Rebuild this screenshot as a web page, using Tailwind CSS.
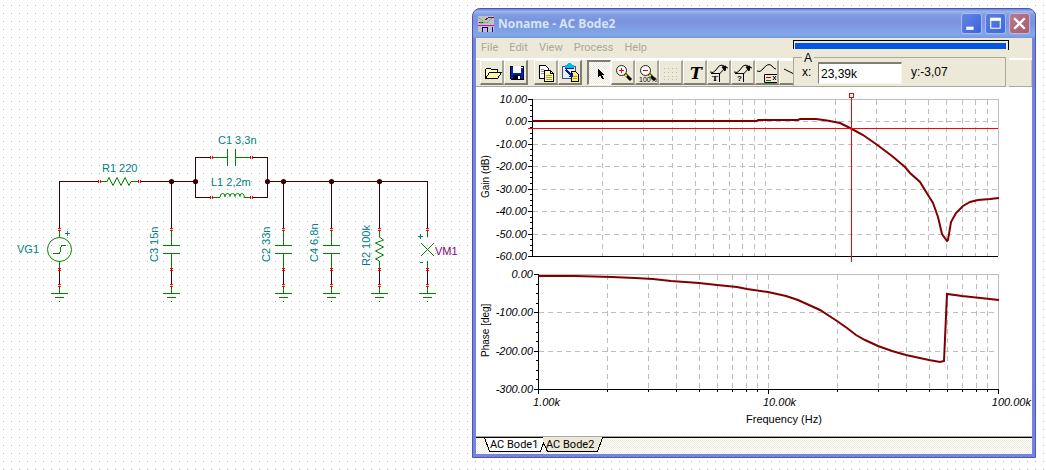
<!DOCTYPE html>
<html lang="en">
<head>
<meta charset="utf-8">
<title>Noname - AC Bode2</title>
<script src="https://cdn.jsdelivr.net/npm/@tailwindcss/browser@4"></script>
</head>
<body class="bg-white text-[11px] text-black font-['Liberation_Sans',Arial,sans-serif]">
<main class="flex min-h-screen items-start overflow-hidden pt-2 pr-[10px] [background:radial-gradient(circle_at_3.5px_5.5px,#b4b4b4_0.7px,transparent_0.8px)_0_0/8px_8px,#fff]">

<!-- Circuit schematic -->
<section class="w-[472px] shrink-0" aria-label="Schematic">
<svg class="block w-full" viewBox="0 8 472 440" fill="none" shape-rendering="crispEdges">
  <defs>
    <g id="pin" stroke="#f00"><path d="M-1 -.5h3M-1 1.5h3"/></g>
    <g id="hpin" stroke="#f00"><path d="M-.5 -1v3M1.5 -1v3"/></g>
    <g id="gnd"><path d="M.5 40v16" stroke="#400000"/><path d="M.5 57v7M-8 64.5h17M-4 68.5h9M0 72.5h1" stroke="#008000"/><use href="#pin" y="40"/><use href="#pin" y="56"/></g>
    <g id="cap"><path d="M.5 1v15M-8 16.5h17M-8 24.5h17M.5 25v15" stroke="#008000"/><use href="#pin"/><use href="#gnd"/></g>
  </defs>
  <g stroke="#400000">
    <path d="M59.5 229V181.5H99M140 181.5H195.500M171.500 181v48M211 157.500H195.500V197.500H211M252 157.500H267.500V197.500H252M267 181.500H427.500V229M283.500 181v48M331.500 181v48M379.500 181v48"/>
  </g>
  <g fill="#400000" shape-rendering="auto">
    <circle cx="171.500" cy="181.500" r="2.600"/><circle cx="195.500" cy="181.500" r="2.600"/><circle cx="267.500" cy="181.500" r="2.600"/><circle cx="283.500" cy="181.500" r="2.600"/><circle cx="331.500" cy="181.500" r="2.600"/><circle cx="379.500" cy="181.500" r="2.600"/>
  </g>
  <g stroke="#008000">
    <path d="M100 181.500h7M131 181.500h8M59.500 230v7M59.500 261v8M53 253.500h6L60.500 251V248L62 245.500H66"/>
    <path d="M212 157.500h15M227.500 149v17M235.500 149v17M236 157.500h15M212 197.500h8M244 197.500h7M379.500 230v7M379.500 261v8M427.500 230v7M427.500 261v8"/>
    <g shape-rendering="auto">
      <circle cx="59.500" cy="249.500" r="12"/>
      <path d="M107 181.500l2-4 4 8 4-8 4 8 4-8 4 8 2-4"/>
      <path d="M220 197.500q0-4 2.500-4t2.500 3q-1 1 0 0q0-3 2.500-3t2.500 3q0-3 2.500-3t2.500 3q0-3 2.500-3t2.500 3q0-3 2-3t2.500 4"/>
      <path d="M379.500 237l4 3-8 3 8 4-8 4 8 4-8 4 4 2M421 243l13 13M434 243l-13 13"/>
    </g>
  </g>
  <use href="#cap" x="171" y="229"/><use href="#cap" x="283" y="229"/><use href="#cap" x="331" y="229"/>
  <use href="#gnd" x="59" y="229"/><use href="#gnd" x="379" y="229"/><use href="#gnd" x="427" y="229"/>
  <use href="#pin" x="59" y="229"/><use href="#pin" x="379" y="229"/><use href="#pin" x="427" y="229"/>
  <use href="#hpin" x="99" y="181"/><use href="#hpin" x="139" y="181"/>
  <use href="#hpin" x="211" y="157"/><use href="#hpin" x="251" y="157"/><use href="#hpin" x="211" y="197"/><use href="#hpin" x="251" y="197"/>
  <path d="M65 233.500h5M67.500 231v5M418 236.500h5M420.500 234v5M420 262.500h3" stroke="#008080"/>
  <g fill="#008080" class="text-[11px]">
    <text x="102" y="172">R1 220</text>
    <text x="218" y="144">C1 3,3n</text>
    <text x="211" y="186">L1 2,2m</text>
    <text x="17" y="253">VG1</text>
    <text transform="translate(158 262) rotate(-90)">C3 15n</text>
    <text transform="translate(270 262) rotate(-90)">C2 33n</text>
    <text transform="translate(318 262) rotate(-90)">C4 6,8n</text>
    <text transform="translate(370 266) rotate(-90)">R2 100k</text>
    <text x="435" y="255" fill="#800080">VM1</text>
  </g>
</svg>
</section>

<!-- Diagram window -->
<section class="relative flex min-w-0 flex-1 flex-col rounded-t-lg border border-[#4e52bd] bg-[#7585de] px-[3px] pb-[3px]">
  <header class="-mx-[3px] flex h-[29px] items-center rounded-t-[7px] bg-[linear-gradient(#6f83d4,#9ab6ec_8%,#7f9de2_20%,#7993dd_45%,#7f9fe4_70%,#82a8e9_88%,#7896dc)] px-[5px]">
    <svg class="size-4 shrink-0" viewBox="0 0 16 16" fill="none" shape-rendering="crispEdges">
      <path fill="#c0c0c0" d="M0 0h16v16H0z"/>
      <path d="M1 6h4M7 4l3-2 3-1h3" stroke="#800060"/><path d="M1 2l5 4 3 1 5-5M2 7h4" stroke="#0e0" stroke-dasharray="2 1" shape-rendering="auto"/>
      <path d="M0 9.500h16" stroke="#f000c0"/><path d="M4.500 11v5M9.500 11v5M14.500 11v5" stroke="#0000c0"/><path d="M4 11.500h6" stroke="#0000c0"/>
    </svg>
    <h1 class="ml-1 flex-1 whitespace-nowrap text-[12px] leading-4 font-bold text-[#d8e4f8] font-['Open_Sans',sans-serif]">Noname - AC Bode2</h1>
    <div class="flex gap-[3px]">
      <button aria-label="Minimize" class="size-[21px] rounded-[3px] border border-[#a9bdf0] bg-linear-to-br from-[#6685e4] to-[#3a62dc]"><svg viewBox="0 0 18 18" class="block"><path fill="#fff" d="M4 12h7v3H4z"/></svg></button>
      <button aria-label="Maximize" class="size-[21px] rounded-[3px] border border-[#a9bdf0] bg-linear-to-br from-[#5b7ce0] to-[#3a6ae4]"><svg viewBox="0 0 18 18" class="block" fill="none" stroke="#fff"><path d="M4.500 4.500h9v9h-9z"/><path d="M4 5h10" stroke-width="3"/></svg></button>
      <button aria-label="Close" class="size-[21px] rounded-[3px] border border-[#c5b5dc] bg-linear-to-br from-[#b67a90] to-[#ab5a6c]"><svg viewBox="0 0 18 18" class="block"><path d="M4 4l10 10M14 4L4 14" stroke="#fff" stroke-width="2.200"/></svg></button>
    </div>
  </header>

  <nav class="flex h-5 items-center gap-[11px] bg-[#ece9d8] pl-[5px] text-[11px] leading-4 text-[#aca899] font-[Roboto,sans-serif]">
    <button>File</button><button>Edit</button><button>View</button><button>Process</button><button>Help</button>
  </nav>

  <div class="flex h-[29px] items-start overflow-hidden border-t-2 border-b border-t-white border-b-[#aca899] bg-[#ece9d8] pl-1">
    <button aria-label="Open" class="h-[25px] w-6 shrink-0 border-t border-l border-r-2 border-b-2 border-t-white border-l-white border-r-[#aca899] border-b-[#817d70]">
      <svg class="block h-[22px] w-[21px]" viewBox="0 0 21 22" shape-rendering="crispEdges"><path d="M4.500 17.500V8.500l1-1h4l1 1h6v3" fill="#ffffc0" stroke="#000"/><path d="M4.500 17.500l4-6h12l-4 6z" fill="#fff8a0" stroke="#000"/></svg></button>
    <button aria-label="Save" class="h-[25px] w-6 shrink-0 border-t border-l border-r-2 border-b-2 border-t-white border-l-white border-r-[#817d70] border-b-[#817d70]">
      <svg class="block h-[22px] w-[21px]" viewBox="0 0 21 22" shape-rendering="crispEdges"><path d="M5 5h14v14H6l-1-1z" fill="#000"/><path d="M6 6h12v12H6z" fill="#0020d0"/><path d="M8 5h8v7H8z" fill="#fff"/><path d="M8 14h8v5H8z" fill="#000"/><path d="M13 15h2v3h-2z" fill="#fff"/><path d="M16 6h2v1h-2z" fill="#fff"/></svg></button>
    <button aria-label="Copy" class="ml-[6px] h-[25px] w-6 shrink-0 border-t border-l border-r-2 border-b-2 border-t-white border-l-white border-r-[#aca899] border-b-[#817d70]">
      <svg class="block h-[22px] w-[21px]" viewBox="0 0 21 22" shape-rendering="crispEdges" stroke="#000"><path d="M4.500 4.500h6l3 3v10h-9z" fill="#fff"/><path d="M6 8.500h3M6 10.500h3M6 12.500h3" stroke="#999"/><path d="M9.500 9.500h6l3 3v8h-9z" fill="#ffffa0"/><path d="M15.500 9.500v3h3" fill="none"/><path d="M11 14.500h6M11 16.500h6M11 18.500h6" stroke="#a8a040"/></svg></button>
    <button aria-label="Paste" class="h-[25px] w-6 shrink-0 border-t border-l border-r-2 border-b-2 border-t-white border-l-white border-r-[#817d70] border-b-[#817d70]">
      <svg class="block h-[22px] w-[21px]" viewBox="0 0 21 22" shape-rendering="crispEdges"><path d="M3.500 5.500h13v12h-13z" fill="#e8eeff" stroke="#405080"/><path d="M6 4h2l1-2h3l1 2h2v3H6z" fill="#00b8f0"/><path d="M6 7.500h9" stroke="#00208a"/><path d="M12.500 10.500h4l3 3v7h-7z" fill="#fff060" stroke="#000"/><path d="M14 15.500h4M14 17.500h4" stroke="#a8a040"/><path d="M7 9l6 6" stroke="#0018a0" stroke-width="2"/><path d="M14 11v5H9z" fill="#0018a0"/></svg></button>
    <button aria-label="Select" aria-pressed="true" class="ml-[5px] h-[25px] w-6 shrink-0 border-t-2 border-l-2 border-r border-b border-t-[#817d70] border-l-[#817d70] border-r-white border-b-white bg-[repeating-conic-gradient(#ece9d8_0_25%,#fff_0_50%)] bg-size-[2px_2px]">
      <svg class="block h-[22px] w-[21px]" viewBox="0 0 21 22" shape-rendering="crispEdges"><path d="M9 6v9l2-2 2 4h2l-2-4h2z" fill="#000"/></svg></button>
    <button aria-label="Zoom in" class="h-[25px] w-6 shrink-0 border-t border-l border-r-2 border-b-2 border-t-white border-l-white border-r-[#aca899] border-b-[#817d70]">
      <svg class="block h-[22px] w-[21px]" viewBox="0 0 21 22"><path d="M13 13l6 6" stroke="#000" stroke-width="3"/><path d="M13 14l2 1" stroke="#ee0" stroke-width="2"/><circle cx="9.500" cy="9.500" r="5" fill="#fff" stroke="#222"/><path d="M7 9.500h5M9.500 7v5" stroke="#f00" shape-rendering="crispEdges"/></svg></button>
    <button aria-label="Zoom 100%" class="h-[25px] w-6 shrink-0 border-t border-l border-r-2 border-b-2 border-t-white border-l-white border-r-[#aca899] border-b-[#817d70]">
      <svg class="block h-[22px] w-[21px]" viewBox="0 0 21 22"><path d="M13 13l6 6" stroke="#000" stroke-width="3"/><path d="M13 14l2 1" stroke="#ee0" stroke-width="2"/><circle cx="9.500" cy="9.500" r="5" fill="#fff" stroke="#222"/><path d="M7 9.500h5" stroke="#f00" shape-rendering="crispEdges"/><text x="3" y="21" font-size="7">100%</text></svg></button>
    <button aria-label="Grid" class="h-[25px] w-6 shrink-0 border-t border-l border-r-2 border-b-2 border-t-white border-l-white border-r-[#aca899] border-b-[#817d70]">
      <svg class="block h-[22px] w-[21px]" viewBox="0 0 21 22" shape-rendering="crispEdges"><path d="M4 7.500h14M4 11.500h14M4 15.500h14M4 18.500h14" stroke="#bcb8a8" stroke-dasharray="1 3"/></svg></button>
    <button aria-label="Text" class="h-[25px] w-6 shrink-0 border-t border-l border-r-2 border-b-2 border-t-white border-l-white border-r-[#aca899] border-b-[#817d70]">
      <svg class="block h-[22px] w-[21px]" viewBox="0 0 21 22"><text x="12" y="18" text-anchor="middle" font-size="16" font-weight="bold" font-style="italic" font-family="DejaVu Serif">T</text></svg></button>
    <button aria-label="Text label" class="h-[25px] w-6 shrink-0 border-t border-l border-r-2 border-b-2 border-t-white border-l-white border-r-[#aca899] border-b-[#817d70]">
      <svg class="block h-[22px] w-[21px] overflow-visible" viewBox="0 0 21 22" fill="none" stroke="#000"><path d="M2 11q3 2 6-2 4-7 8-4 2 2 4 2"/><path d="M11.500 13L18 6"/><path d="M14 6l4-1-1 5z" fill="#000"/><path d="M3 12.500h9M11.500 13v8"/><text x="4" y="20" font-size="8" font-weight="bold" font-family="DejaVu Serif" fill="#000" stroke="none">T</text></svg></button>
    <button aria-label="Query label" class="h-[25px] w-6 shrink-0 border-t border-l border-r-2 border-b-2 border-t-white border-l-white border-r-[#aca899] border-b-[#817d70]">
      <svg class="block h-[22px] w-[21px] overflow-visible" viewBox="0 0 21 22" fill="none" stroke="#000"><path d="M2 11q3 2 6-2 4-7 8-4 2 2 4 2"/><path d="M11.500 13L18 6"/><path d="M14 6l4-1-1 5z" fill="#000"/><path d="M3 12.500h9M11.500 13v8"/><text x="5" y="20" font-size="8" font-weight="bold" fill="#000" stroke="none">?</text></svg></button>
    <button aria-label="Legend" class="h-[25px] w-6 shrink-0 border-t border-l border-r-2 border-b-2 border-t-white border-l-white border-r-[#aca899] border-b-[#817d70]">
      <svg class="block h-[22px] w-[21px]" viewBox="0 0 21 22" fill="none" stroke="#000"><path d="M1 10q3 2 6-2 5-7 9-3 2 3 4 3"/><path d="M21 13.500H8.500v8H21"/><path d="M10 16.500h5" stroke="#c00"/><path d="M10 19.500h5" stroke="#080"/><path d="M17 15l3 4M20 15l-3 4"/></svg></button>
    <button aria-label="Line" class="h-[25px] w-6 shrink-0 border-t border-l border-r-2 border-b-2 border-t-white border-l-white border-r-[#aca899] border-b-[#817d70]">
      <svg class="block h-[22px] w-[21px]" viewBox="0 0 21 22"><path d="M4 8l10 5" stroke="#000"/></svg></button>
    <span class="flex-1"></span>
    <span class="h-full w-px bg-[#c8c4b2]"></span>
  </div>

  <!-- Cursor readout that floats over the toolbar -->
  <form class="absolute top-[31px] right-[26px] w-[216px]">
    <div class="border-x border-t border-black bg-[#ece9d8] p-px"><div class="mt-px mr-px h-[6px] bg-[#0055e5]"></div></div>
    <fieldset class="relative mr-[3px] mt-[7px] flex h-[30px] items-center border border-[#aca899] bg-[#ece9d8] pl-2 text-[12px] leading-4 shadow-[0_-8px_0_#ece9d8,3px_0_0_#ece9d8]">
      <legend class="absolute -top-[7px] left-2 bg-[#ece9d8] px-0.5 leading-[14px]">A</legend>
      <label for="cx" class="w-4">x:</label>
      <input id="cx" value="23,39k" class="mt-0.5 h-[22px] w-[84px] border border-t-2 border-[#f6f4ea] border-t-[#817d70] border-l-[#817d70] bg-white pl-0.5">
      <output class="ml-[9px]">y:-3,07</output>
    </fieldset>
  </form>

  <div class="bg-white">
<svg class="block w-full" viewBox="476 87 556 349" fill="none" shape-rendering="crispEdges">
  <g stroke="#bebebe">
    <path d="M532 99.500H998.500V256M538 274.500H998.500V389"/>
    <path stroke-dasharray="5 4" d="M533 121.500H998M533 144.500H998M533 166.500H998M533 189.500H998M533 211.500H998M533 234.500H998M539 312.500H998M539 351.500H998"/>
    <path stroke-dasharray="5 4" d="M602.500 100V256M643.500 100V256M672.500 100V256M695.500 100V256M713.500 100V256M729.500 100V256M742.500 100V256M754.500 100V256M765.500 100V256M835.500 100V256M876.500 100V256M905.500 100V256M928.500 100V256M946.500 100V256M962.500 100V256M975.500 100V256M987.500 100V256"/>
    <path stroke-dasharray="5 4" d="M607.500 275V389M648.500 275V389M676.500 275V389M699.500 275V389M717.500 275V389M732.500 275V389M746.500 275V389M757.500 275V389M768.500 275V389M837.500 275V389M878.500 275V389M906.500 275V389M929.500 275V389M947.500 275V389M962.500 275V389M976.500 275V389M987.500 275V389"/>
  </g>
  <g stroke="#000">
    <path d="M532.500 99V256.500H998M538.500 274V389.500H999"/>
    <path d="M528 99.500h5M528 121.500h5M528 144.500h5M528 166.500h5M528 189.500h5M528 211.500h5M528 234.500h5M528 256.500h5M534 274.500h5M534 312.500h5M534 351.500h5M534 389.500h5M538.500 389v5M768.500 389v5M998.500 389v5"/>
    <path d="M530 105.500h3M530 110.500h3M530 116.500h3M530 127.500h3M530 133.500h3M530 138.500h3M530 149.500h3M530 155.500h3M530 160.500h3M530 172.500h3M530 177.500h3M530 183.500h3M530 194.500h3M530 200.500h3M530 205.500h3M530 217.500h3M530 222.500h3M530 228.500h3M530 239.500h3M530 245.500h3M530 250.500h3"/>
    <path d="M536 284.500h3M536 293.500h3M536 303.500h3M536 322.500h3M536 332.500h3M536 341.500h3M536 360.500h3M536 370.500h3M536 379.500h3"/>
    <path d="M607.500 389v3M648.500 389v3M676.500 389v3M699.500 389v3M717.500 389v3M732.500 389v3M746.500 389v3M757.500 389v3M837.500 389v3M878.500 389v3M906.500 389v3M929.500 389v3M947.500 389v3M962.500 389v3M976.500 389v3M987.500 389v3"/>
  </g>
  <g stroke="#800000" stroke-width="2" shape-rendering="auto">
    <path d="M532 121H757L758 120H798L800 119H816L827 120.500L840 123L851 128.500L863 135L876 144L892 156L905 167L910 173L920 182L928 195L933 203L938 217L942 234L947 241L948 240L951 222L956 213L963 206L970 202L978 200L990 199L999 198"/>
    <path d="M538 276H575L612 277L635 278L653 279L671 281L685 282L699 283L717 285L737 287L747 289L768 292L786 296L798 300L820 310L837 321L847 328L856 335L865 340L878 346L892 351L906 355L929 360L940 362L944 361L947 294L962 296L999 300"/>
  </g>
  <path d="M528 128.500H998M851.500 97V262M849.500 93.500h4v4h-4z" stroke="#f00"/>
  <g fill="#000" class="text-[11px] italic" text-anchor="end">
    <text x="527" y="103">10.00</text><text x="527" y="125">0.00</text><text x="527" y="148">-10.00</text><text x="527" y="170">-20.00</text><text x="527" y="193">-30.00</text><text x="527" y="215">-40.00</text><text x="527" y="238">-50.00</text><text x="527" y="260">-60.00</text>
    <text x="533" y="278">0.00</text><text x="533" y="316">-100.00</text><text x="533" y="355">-200.00</text><text x="533" y="393">-300.00</text>
    <text x="560" y="406">1.00k</text><text x="796" y="406">10.00k</text><text x="1031" y="406">100.00k</text>
  </g>
  <g fill="#000">
    <text x="746" y="423" class="text-[11px]">Frequency (Hz)</text>
    <text transform="translate(489 198) rotate(-90)" class="text-[10px]">Gain (dB)</text>
    <text transform="translate(489 357) rotate(-90)" class="text-[10px]">Phase [deg]</text>
  </g>
</svg>
  </div>

  <footer class="flex h-[18px] border-t border-[#aca899] bg-[repeating-conic-gradient(#eeebdc_0_25%,#fff_0_50%)] bg-size-[2px_2px] pl-2 font-[Roboto,sans-serif] leading-4 shadow-[inset_0_1px_0_#000]">
    <button class="relative h-4 w-[62px] text-left"><svg class="absolute inset-0" viewBox="0 0 62 16" shape-rendering="crispEdges"><path d="M.500 .500L5.500 14.500H56.500L61.500 .500" fill="#fff" stroke="#000"/></svg><span class="relative pl-[6px]">AC Bode1</span></button>
    <button class="relative -ml-[3px] h-4 w-[60px] text-left"><svg class="absolute inset-0" viewBox="0 0 60 16" shape-rendering="crispEdges"><path d="M0 0H59L54 15H4L1 7z" fill="#ece9d8"/><path d="M1 7L4.500 14.500H54.500L59.500 .500" fill="none" stroke="#000"/></svg><span class="relative pl-[3px]">AC Bode2</span></button>
  </footer>
</section>
</main>
</body>
</html>
